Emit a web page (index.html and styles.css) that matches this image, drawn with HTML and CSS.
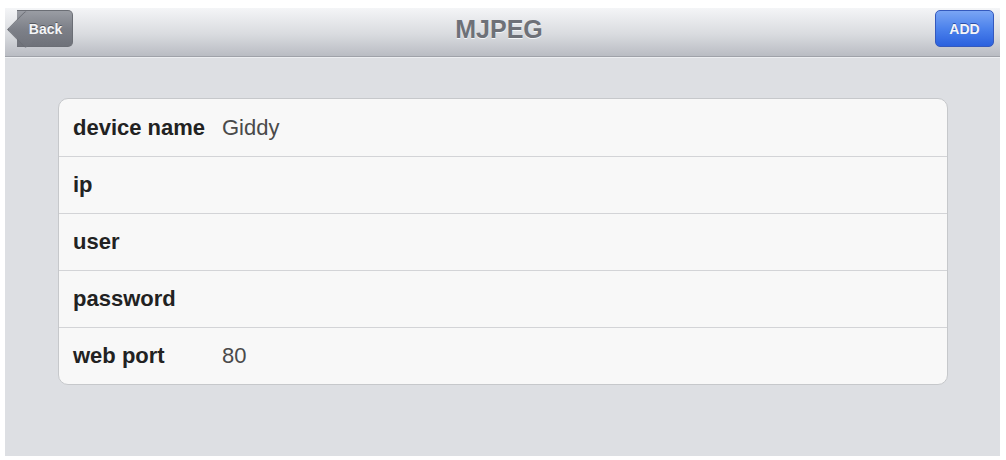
FILE: index.html
```html
<!DOCTYPE html>
<html lang="en">
<head>
  <meta charset="UTF-8">
  <meta name="viewport" content="width=device-width, initial-scale=1.0">
  <title>MJPEG</title>
  <link rel="stylesheet" href="styles.css">
</head>
<body>
  <div class="screen">
    <div class="navbar">
      <div class="left"><button class="back">Back</button></div>
      <div class="title">MJPEG</div>
      <div class="right"><button class="add">ADD</button></div>
    </div>

    <div class="content">
      <div class="card">
        <div class="row">
          <span class="label">device name</span>
          <span class="value">Giddy</span>
        </div>
        <div class="row">
          <span class="label">ip</span>
          <span class="value"></span>
        </div>
        <div class="row">
          <span class="label">user</span>
          <span class="value"></span>
        </div>
        <div class="row">
          <span class="label">password</span>
          <span class="value"></span>
        </div>
        <div class="row">
          <span class="label">web port</span>
          <span class="value">80</span>
        </div>
      </div>
    </div>
  </div>
</body>
</html>
```

FILE: styles.css
```css
body {
  margin: 0;
  background-color: #ffffff;
  font-family: 'Liberation Sans', Arial, sans-serif;
}
.screen {
  margin: 8px 6px 4px 5px;
  height: 448px;
  background-color: #dddfe3;
  display: flex;
  flex-direction: column;
}
.navbar {
  height: 49px;
  display: grid;
  grid-template-columns: 1fr auto 1fr;
  align-items: start;
  padding-top: 2px;
  box-sizing: border-box;
  background: linear-gradient(#f4f5f7, #d9dbdf 55%, #b9bcc3);
  border-bottom: 1px solid #9fa2a9;
  box-shadow: 0 1px 0 #eceef1;
}
.right {
  display: flex;
  justify-content: flex-end;
}
.title {
  margin-top: 5px;
  margin-right: 7px;
  font-size: 25px;
  font-weight: bold;
  color: #6e7178;
  text-shadow: 0 1px 0 #f4f5f7;
}
button {
  font-family: 'Liberation Sans', Arial, sans-serif;
  font-size: 14px;
  font-weight: bold;
  color: #f4f5f8;
  height: 37px;
  border-radius: 5px;
  cursor: pointer;
  padding: 0;
}
.back {
  position: relative;
  z-index: 0;
  width: 56px;
  margin-left: 12px;
  padding-left: 2px;
  border: 1px solid #6b6e75;
  border-left: none;
  border-radius: 0 5px 5px 0;
  background: linear-gradient(#9a9da4, #7d8088 50%, #6f727a);
  text-shadow: 0 -1px 0 #55585e;
}
.back::before {
  content: "";
  position: absolute;
  left: -5px;
  top: 4.5px;
  width: 26px;
  height: 26px;
  transform: rotate(45deg);
  border-radius: 3px;
  border-left: 1px solid #6b6e75;
  border-bottom: 1px solid #6b6e75;
  background: linear-gradient(135deg, #9a9da4, #7d8088 50%, #6f727a);
  z-index: -1;
}
.add {
  width: 59px;
  margin-right: 6px;
  border: 1px solid #3459bd;
  background: linear-gradient(#7aa5f4, #4c82ec 50%, #2b61de);
  text-shadow: 0 -1px 0 #2b4fa8;
}
.content {
  padding: 41px 52px 0 53px;
}
.card {
  background-color: #f8f8f8;
  border: 1px solid #c6c8cb;
  border-radius: 10px;
  overflow: hidden;
}
.row {
  height: 56px;
  display: flex;
  align-items: center;
  padding-left: 14px;
  border-top: 1px solid #d3d4d7;
}
.row:first-child {
  height: 57px;
  border-top: none;
}
.label {
  width: 149px;
  font-size: 22px;
  font-weight: bold;
  color: #222222;
}
.value {
  font-size: 22px;
  color: #4a4a4a;
}
```
